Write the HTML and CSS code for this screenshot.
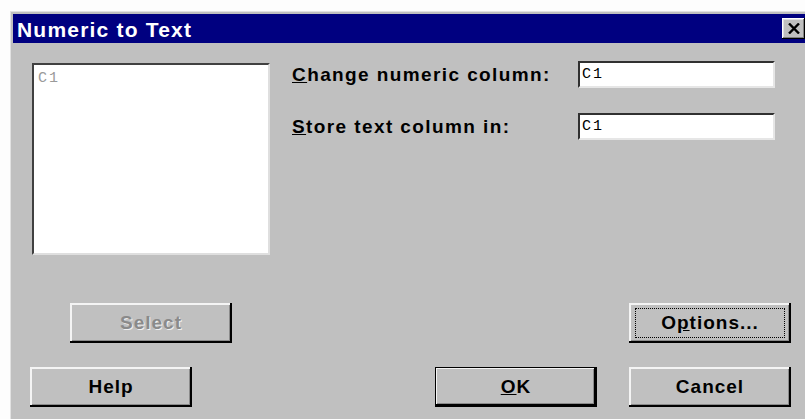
FILE: index.html
```html
<!DOCTYPE html>
<html lang="en">
<head>
<meta charset="utf-8">
<title>Numeric to Text</title>
<link rel="stylesheet" href="styles.css">
</head>
<body>
<div class="window">
  <div class="titlebar">
    <span class="title">Numeric to Text</span>
    <button class="close" type="button" aria-label="Close">
      <svg width="12" height="11" viewBox="0 0 12 11"><path d="M1 0.5 L11 10.5 M11 0.5 L1 10.5" stroke="#000" stroke-width="2.4" fill="none"/></svg>
    </button>
  </div>
  <div class="body">
    <div class="top">
      <div class="listbox"><span class="item">C1</span></div>
      <div class="fields">
        <label class="label"><u>C</u>hange numeric column:</label>
        <div class="field">C1</div>
        <label class="label"><u>S</u>tore text column in:</label>
        <div class="field">C1</div>
      </div>
    </div>
    <div class="row row-first">
      <button class="btn btn-select" type="button" disabled>Select</button>
      <button class="btn btn-options" type="button"><span class="focus">O<u>p</u>tions...</span></button>
    </div>
    <div class="row row-second">
      <button class="btn btn-help" type="button">Help</button>
      <button class="btn btn-default" type="button"><u>O</u>K</button>
      <button class="btn btn-cancel" type="button">Cancel</button>
    </div>
  </div>
</div>
</body>
</html>
```

FILE: styles.css
```css
html, body {
  margin: 0;
  padding: 0;
  background: #fdfdfd;
  overflow: hidden;
  width: 805px;
  height: 419px;
}

.window {
  margin: 11px 0 0 10px;
  width: 793px;
  height: 420px;
  background: #c0c0c0;
  border-top: 1px solid #e2e2e2;
  border-left: 1px solid #e2e2e2;
  padding: 2px 0 0 2px;
  font-family: "Liberation Sans", Arial, sans-serif;
  font-weight: bold;
  color: #000;
}

/* caption bar */
.titlebar {
  height: 29px;
  background: #000080;
  display: flex;
  align-items: center;
  padding: 0 1px 0 4px;
}

.title {
  color: #fff;
  font-size: 21px;
  letter-spacing: 1.2px;
  line-height: 29px;
  padding-top: 1px;
}

.close {
  margin-left: auto;
  width: 23px;
  height: 21px;
  padding: 0;
  background: #c0c0c0;
  border: none;
  box-shadow: inset -1px -1px #000, inset 1px 1px #fff, inset -2px -2px #808080, inset 2px 2px #dfdfdf;
  display: flex;
  align-items: center;
  justify-content: center;
  align-self: flex-start;
  margin-top: 4px;
}

.body {
  padding: 18px 0 0 0;
}

.top {
  display: flex;
  align-items: flex-start;
  padding-left: 19px;
}

/* sunken white list */
.listbox {
  margin-top: 2px;
  width: 238px;
  height: 192px;
  box-sizing: border-box;
  background: #fff;
  border-top: 2px solid #404040;
  border-left: 2px solid #404040;
  border-right: 2px solid #dfdfdf;
  border-bottom: 2px solid #dfdfdf;
  padding: 3px 0 0 4px;
}

.item,
.field {
  font-family: "Liberation Mono", "DejaVu Sans Mono", monospace;
  font-weight: normal;
  font-size: 15px;
  letter-spacing: 2px;
  line-height: 18px;
}

.item {
  color: #9a9a9a;
}

.fields {
  margin-left: 22px;
  display: grid;
  grid-template-columns: 286px 197px;
  row-gap: 25px;
  align-items: center;
}

.label {
  font-size: 19px;
  letter-spacing: 1.4px;
  line-height: 22px;
}

.field {
  height: 27px;
  box-sizing: border-box;
  background: #fff;
  border-top: 2px solid #303030;
  border-left: 2px solid #303030;
  border-right: 2px solid #e6e6e6;
  border-bottom: 2px solid #e6e6e6;
  padding: 3px 0 0 2px;
  color: #000;
}

.row {
  display: flex;
}

.row-first {
  margin-top: 48px;
  padding-left: 57px;
}

.row-second {
  margin-top: 24px;
  padding-left: 17px;
}

/* raised push buttons */
.btn {
  width: 162px;
  height: 40px;
  padding: 0;
  border: none;
  background: #c0c0c0;
  font-family: "Liberation Sans", Arial, sans-serif;
  font-weight: bold;
  font-size: 19px;
  letter-spacing: 1px;
  color: #000;
  box-shadow: inset -2px -2px #000, inset 2px 2px #f4f4f4, inset -3px -3px #8a8a8a;
  display: flex;
  align-items: center;
  justify-content: center;
}

.btn-select {
  color: #8a8a8a;
  text-shadow: 1px 1px #f0f0f0;
}

.btn-options {
  margin-left: 397px;
}

.focus {
  display: flex;
  align-items: center;
  justify-content: center;
  width: 150px;
  height: 30px;
  box-sizing: border-box;
  border: 1px dotted #000;
}

.btn-default {
  margin-left: 243px;
  box-shadow: inset 0 0 0 1px #000, inset -3px -3px #000, inset 2px 2px #f4f4f4, inset -4px -4px #8a8a8a;
}

.btn-cancel {
  margin-left: 32px;
}
```
